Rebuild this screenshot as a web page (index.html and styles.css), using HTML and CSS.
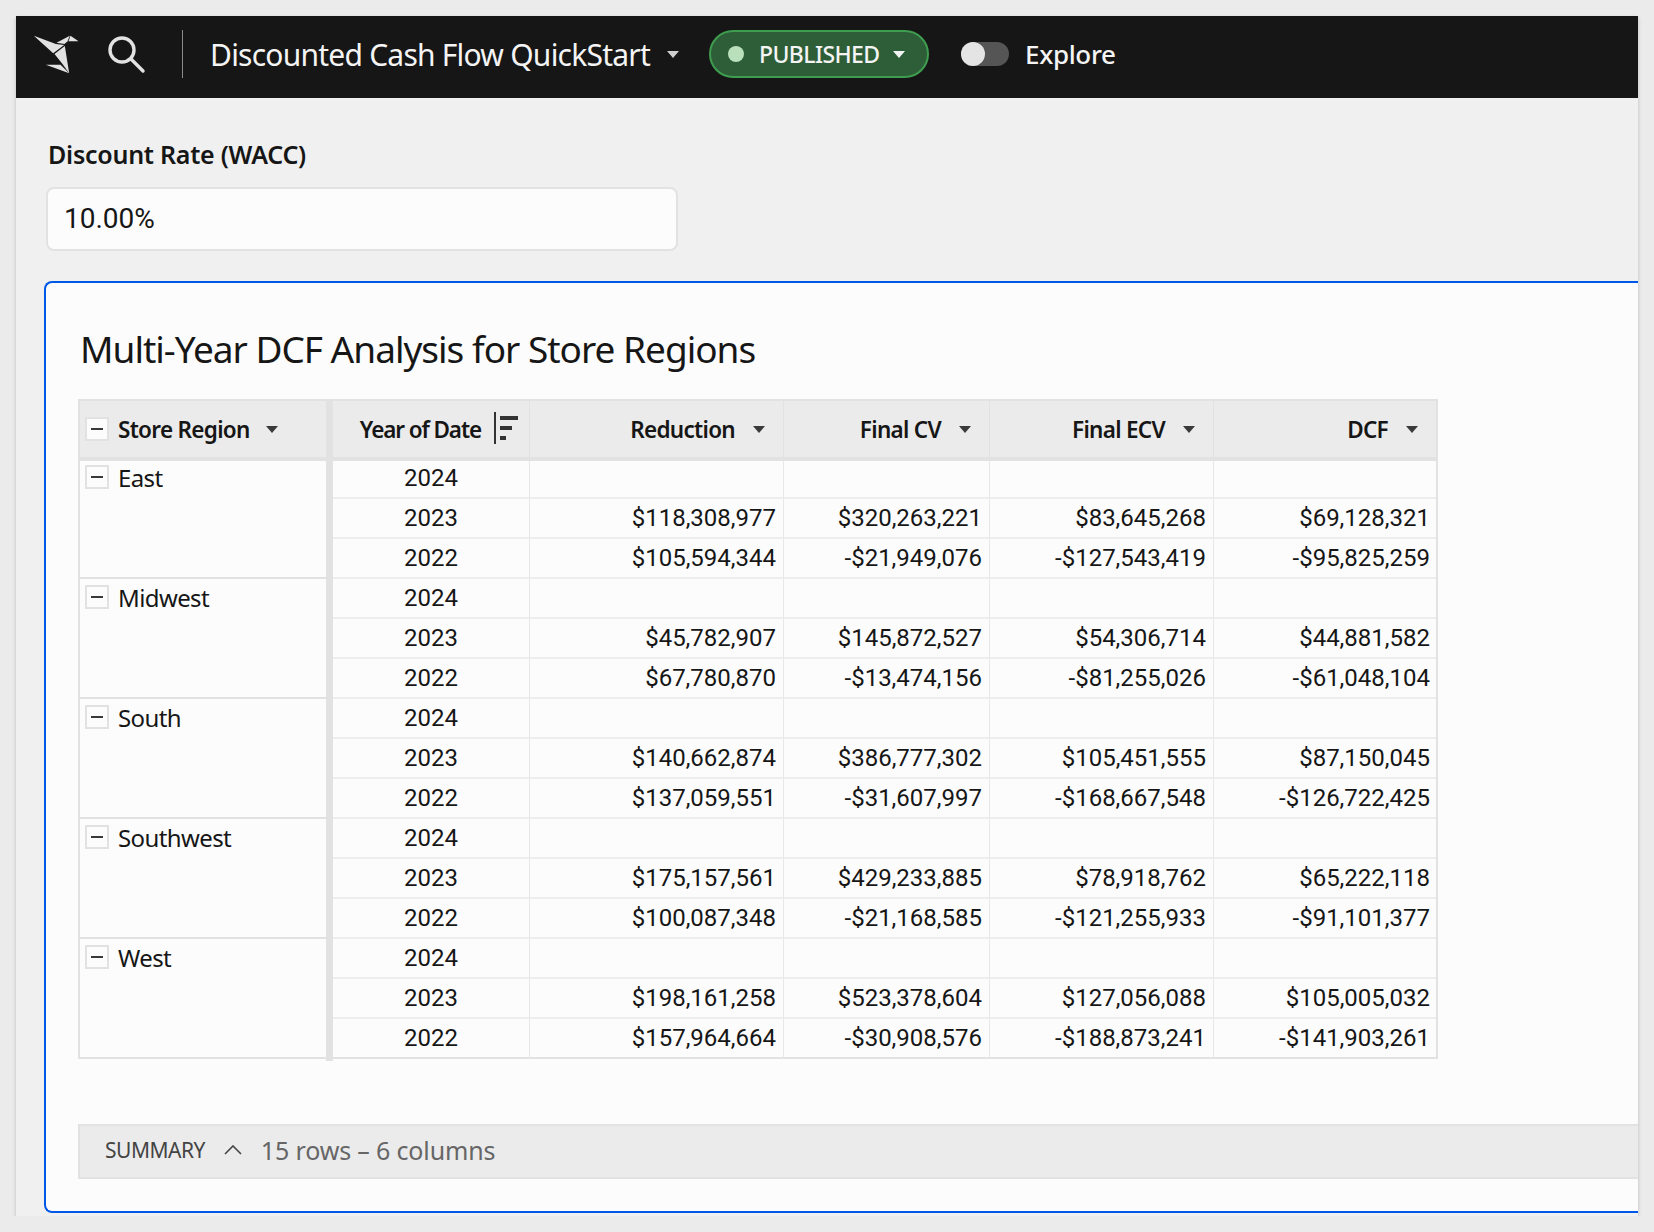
FILE: index.html
```html
<!DOCTYPE html>
<html>

<head>
    <title>Discounted Cash Flow QuickStart</title>
    <link rel="stylesheet" href="styles.css">
</head>

<body>
    <div class="window">
        <header class="topbar">
            <svg class="logo" viewBox="40 40 140 120" width="47" height="40">
                <polygon points="42,45 108,70 133,73 100,98" fill="#e2e2e2" />
                <polygon points="110,66 150,45 143,62 134,70" fill="#e2e2e2" />
                <polygon points="152,45 176,62 146,62" fill="#e2e2e2" />
                <polygon points="135,76 104,100 128,130 148,158" fill="#e2e2e2" />
                <polygon points="78,132 122,132 148,158" fill="#e2e2e2" />
            </svg>
            <svg class="search" viewBox="0 0 40 40" width="40" height="40">
                <circle cx="16" cy="16" r="12" fill="none" stroke="#e2e2e2" stroke-width="3.4" />
                <line x1="25" y1="25" x2="37" y2="37" stroke="#e2e2e2" stroke-width="3.4" stroke-linecap="round" />
            </svg>
            <div class="divider"></div>
            <span class="doc-title">Discounted Cash Flow QuickStart</span>
            <span class="caret caret-grey"></span>
            <div class="pill">
                <span class="dot"></span>
                <span class="pill-text">PUBLISHED</span>
                <span class="caret caret-white"></span>
            </div>
            <div class="toggle"><span class="knob"></span></div>
            <span class="explore">Explore</span>
        </header>

        <main class="content">
            <label class="control-label">Discount Rate (WACC)</label>
            <div class="control-input">10.00%</div>

            <section class="card">
                <h1>Multi-Year DCF Analysis for Store Regions</h1>
                <table class="pivot">
                    <colgroup>
                        <col class="col-region">
                        <col class="col-year">
                        <col class="col-reduction">
                        <col class="col-cv">
                        <col class="col-ecv">
                        <col class="col-dcf">
                    </colgroup>
                    <thead>
                        <tr>
                            <th class="region">
                                <div class="head-left"><span class="box"></span>Store Region<span class="caret caret-dark caret-region"></span></div>
                            </th>
                            <th class="year-head">
                                <div class="head-year">Year of Date
                                    <svg class="sort" viewBox="0 0 26 32" width="26" height="32">
                                        <rect x="0" y="0" width="2" height="32" fill="#333" />
                                        <rect x="6" y="4" width="18" height="4" fill="#333" />
                                        <rect x="6" y="14" width="12" height="4" fill="#333" />
                                        <rect x="6" y="24" width="6" height="4" fill="#333" />
                                    </svg>
                                </div>
                            </th>
                            <th><div class="head-right">Reduction<span class="caret caret-dark"></span></div></th>
                            <th><div class="head-right">Final CV<span class="caret caret-dark"></span></div></th>
                            <th><div class="head-right">Final ECV<span class="caret caret-dark"></span></div></th>
                            <th><div class="head-right">DCF<span class="caret caret-dark"></span></div></th>
                        </tr>
                    </thead>
                    <tbody>
                        <tr class="first-row">
                            <td class="region" rowspan="3"><div class="region-name"><span class="box"></span>East</div></td>
                            <td class="year">2024</td><td></td><td></td><td></td><td></td>
                        </tr>
                        <tr><td class="year">2023</td><td>$118,308,977</td><td>$320,263,221</td><td>$83,645,268</td><td>$69,128,321</td></tr>
                        <tr><td class="year">2022</td><td>$105,594,344</td><td>-$21,949,076</td><td>-$127,543,419</td><td>-$95,825,259</td></tr>
                        <tr>
                            <td class="region" rowspan="3"><div class="region-name"><span class="box"></span>Midwest</div></td>
                            <td class="year">2024</td><td></td><td></td><td></td><td></td>
                        </tr>
                        <tr><td class="year">2023</td><td>$45,782,907</td><td>$145,872,527</td><td>$54,306,714</td><td>$44,881,582</td></tr>
                        <tr><td class="year">2022</td><td>$67,780,870</td><td>-$13,474,156</td><td>-$81,255,026</td><td>-$61,048,104</td></tr>
                        <tr>
                            <td class="region" rowspan="3"><div class="region-name"><span class="box"></span>South</div></td>
                            <td class="year">2024</td><td></td><td></td><td></td><td></td>
                        </tr>
                        <tr><td class="year">2023</td><td>$140,662,874</td><td>$386,777,302</td><td>$105,451,555</td><td>$87,150,045</td></tr>
                        <tr><td class="year">2022</td><td>$137,059,551</td><td>-$31,607,997</td><td>-$168,667,548</td><td>-$126,722,425</td></tr>
                        <tr>
                            <td class="region" rowspan="3"><div class="region-name"><span class="box"></span>Southwest</div></td>
                            <td class="year">2024</td><td></td><td></td><td></td><td></td>
                        </tr>
                        <tr><td class="year">2023</td><td>$175,157,561</td><td>$429,233,885</td><td>$78,918,762</td><td>$65,222,118</td></tr>
                        <tr><td class="year">2022</td><td>$100,087,348</td><td>-$21,168,585</td><td>-$121,255,933</td><td>-$91,101,377</td></tr>
                        <tr>
                            <td class="region last-region" rowspan="3"><div class="region-name"><span class="box"></span>West</div></td>
                            <td class="year">2024</td><td></td><td></td><td></td><td></td>
                        </tr>
                        <tr><td class="year">2023</td><td>$198,161,258</td><td>$523,378,604</td><td>$127,056,088</td><td>$105,005,032</td></tr>
                        <tr class="last-row"><td class="year">2022</td><td>$157,964,664</td><td>-$30,908,576</td><td>-$188,873,241</td><td>-$141,903,261</td></tr>
                    </tbody>
                </table>

                <div class="summary">
                    <span class="summary-label">SUMMARY</span>
                    <svg class="chevron" viewBox="0 0 18 10" width="18" height="10">
                        <polyline points="1,9 9,1 17,9" fill="none" stroke="#444" stroke-width="1.6" />
                    </svg>
                    <span class="summary-count">15 rows – 6 columns</span>
                </div>
            </section>
        </main>
    </div>
</body>

</html>
```

FILE: styles.css
```css
body {
    margin: 0;
    background-color: #ebebeb;
    font-family: "Noto Sans", Arial, sans-serif;
    color: #161616;
}

.window {
    margin: 16px 16px 0 16px;
    height: 1200px;
    background-color: #f0f0f0;
    box-shadow: 0 2px 4px rgba(0, 0, 0, 0.2);
    overflow: hidden;
}

.topbar {
    display: flex;
    align-items: center;
    box-sizing: border-box;
    height: 82px;
    padding-bottom: 6px;
    background-color: #161616;
}

.logo {
    margin-left: 17px;
}

.search {
    margin-left: 26px;
}

.divider {
    width: 1px;
    height: 48px;
    margin-left: 36px;
    background-color: #8a8a8a;
}

.doc-title {
    margin-left: 27px;
    font-size: 30px;
    letter-spacing: -0.77px;
    color: #f4f4f4;
}

.caret {
    display: inline-block;
    flex: none;
    width: 0;
    height: 0;
    border-left: 6.5px solid transparent;
    border-right: 6.5px solid transparent;
    border-top: 7px solid #333;
}

.caret-grey {
    margin-left: 17px;
    border-top-color: #cfcfcf;
}

.caret-white {
    margin-left: 13px;
    border-top-color: #f4f4f4;
}

.caret-dark {
    margin-left: 18px;
    border-top-color: #3a3a3a;
}

.caret-region {
    margin-left: 16px;
}

.pill {
    display: flex;
    align-items: center;
    box-sizing: border-box;
    width: 220px;
    height: 48px;
    margin-left: 30px;
    padding-left: 17px;
    background-color: #2d5e37;
    border: 2px solid #3f9d50;
    border-radius: 24px;
}

.dot {
    width: 16px;
    height: 16px;
    border-radius: 50%;
    background-color: #b9e0bb;
}

.pill-text {
    margin-left: 15px;
    font-size: 23px;
    font-weight: 500;
    letter-spacing: -0.6px;
    color: #f4f4f4;
}

.toggle {
    width: 48px;
    height: 24px;
    margin-left: 32px;
    border-radius: 12px;
    background-color: #555;
}

.knob {
    display: block;
    width: 24px;
    height: 24px;
    border-radius: 50%;
    background-color: #e4e4e4;
}

.explore {
    margin-left: 16px;
    font-size: 26px;
    font-weight: 500;
    letter-spacing: -0.35px;
    color: #f4f4f4;
}

.content {
    padding: 41px 0 0 30px;
}

.control-label {
    display: block;
    margin-left: 2px;
    font-size: 25px;
    font-weight: 600;
    line-height: 30px;
    letter-spacing: -0.25px;
}

.control-input {
    box-sizing: border-box;
    width: 632px;
    height: 64px;
    margin-top: 18px;
    padding-left: 16px;
    background-color: #fcfcfc;
    border: 2px solid #e2e2e2;
    border-radius: 8px;
    font-family: Roboto, Arial, sans-serif;
    font-size: 28px;
    line-height: 60px;
}

.card {
    box-sizing: border-box;
    height: 932px;
    margin-top: 30px;
    margin-left: -2px;
    padding: 0 0 0 32px;
    background-color: #fcfcfc;
    border: 2px solid #0058e6;
    border-right: none;
    border-radius: 8px 0 0 8px;
}

.card h1 {
    margin: 0;
    padding: 41px 0 25px 2px;
    font-size: 37px;
    font-weight: 400;
    line-height: 50px;
    letter-spacing: -1px;
}

.pivot {
    width: 1360px;
    table-layout: fixed;
    border-collapse: separate;
    border-spacing: 0;
    border-right: 2px solid #e2e2e2;
    border-top: 2px solid #e2e2e2;
}

.col-region {
    width: 255px;
}

.col-year {
    width: 197px;
}

.col-reduction {
    width: 254px;
}

.col-cv {
    width: 206px;
}

.col-ecv {
    width: 224px;
}

.col-dcf {
    width: 222px;
}

.pivot th {
    height: 56px;
    padding: 0;
    background-color: #ebebeb;
    border-right: 1px solid #e2e2e2;
    border-bottom: 4px solid #e2e2e2;
    font-size: 22.5px;
    font-weight: 600;
}

.pivot th:last-child,
.pivot td:last-child {
    border-right: none;
}

.pivot td {
    box-sizing: border-box;
    height: 40px;
    padding: 0 7px 0 0;
    border-right: 1px solid #e8e8e8;
    border-bottom: 2px solid #ededed;
    font-family: Roboto, Arial, sans-serif;
    font-size: 24px;
    text-align: right;
}

.pivot td:last-child {
    padding-right: 6px;
}

.pivot .first-row td {
    height: 38px;
}

.pivot .first-row td.year {
    padding-bottom: 2px;
}

.pivot .last-row td {
    border-bottom-color: #e2e2e2;
}

.pivot .region {
    border-left: 2px solid #e2e2e2;
    border-right: 7px solid #e2e2e2;
    border-bottom: 2px solid #e2e2e2;
    vertical-align: top;
    text-align: left;
}

.pivot th.region {
    border-bottom-width: 4px;
    vertical-align: middle;
}

.pivot td.year {
    padding: 0;
    text-align: center;
}

.last-region {
    position: relative;
}

.last-region::after {
    content: "";
    position: absolute;
    right: -7px;
    bottom: -4px;
    width: 7px;
    height: 4px;
    background-color: #e2e2e2;
}

.head-left {
    display: flex;
    align-items: center;
    padding-left: 5px;
    letter-spacing: -0.7px;
}

.head-right {
    display: flex;
    align-items: center;
    justify-content: flex-end;
    padding-right: 18px;
    letter-spacing: -0.7px;
}

.head-year {
    display: flex;
    align-items: center;
    justify-content: flex-end;
    padding-right: 9px;
    letter-spacing: -1.1px;
}

.sort {
    margin-left: 13px;
    margin-bottom: 2px;
}

.box {
    box-sizing: border-box;
    position: relative;
    flex: none;
    width: 24px;
    height: 24px;
    margin-right: 9px;
    background-color: #fcfcfc;
    border: 2px solid #e2e2e2;
}

.box::after {
    content: "";
    position: absolute;
    left: 4px;
    top: 9px;
    width: 12px;
    height: 2px;
    background-color: #3a3a3a;
}

.region-name {
    display: flex;
    align-items: center;
    height: 36px;
    padding-left: 5px;
    font-family: "Noto Sans", Arial, sans-serif;
    letter-spacing: -0.6px;
}

.first-row .region-name {
    height: 32px;
}

.summary {
    display: flex;
    align-items: center;
    box-sizing: border-box;
    height: 55px;
    margin-top: 65px;
    padding-left: 25px;
    padding-bottom: 3px;
    background-color: #ebebeb;
    border: 2px solid #e2e2e2;
    border-right: none;
    color: #444;
}

.summary-label {
    font-size: 21px;
    letter-spacing: -0.5px;
}

.chevron {
    margin-left: 19px;
}

.summary-count {
    margin-left: 19px;
    font-size: 25px;
    letter-spacing: -0.15px;
    color: #666;
}
```
